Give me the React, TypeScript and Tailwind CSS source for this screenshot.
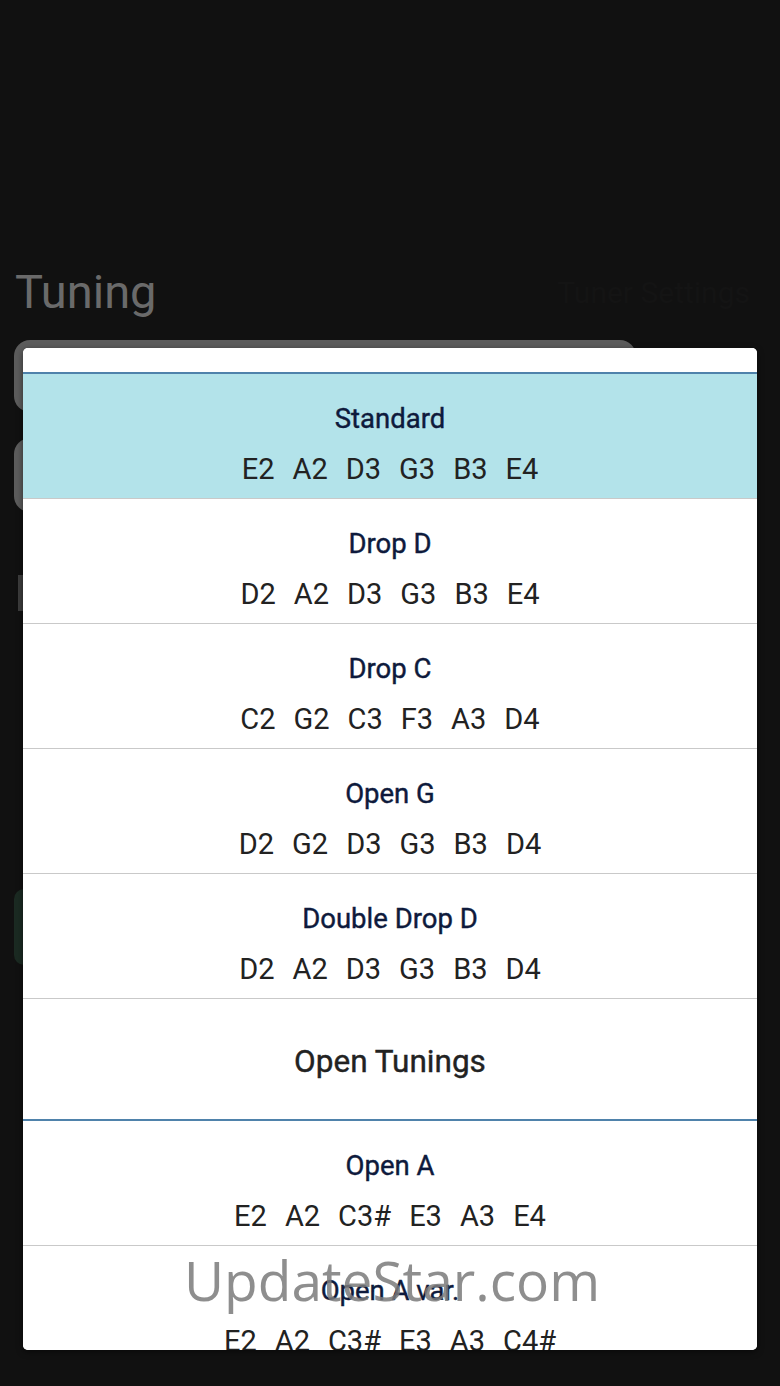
const TUNINGS = [
  { name: "Standard", notes: ["E2", "A2", "D3", "G3", "B3", "E4"], selected: true },
  { name: "Drop D", notes: ["D2", "A2", "D3", "G3", "B3", "E4"] },
  { name: "Drop C", notes: ["C2", "G2", "C3", "F3", "A3", "D4"] },
  { name: "Open G", notes: ["D2", "G2", "D3", "G3", "B3", "D4"] },
  { name: "Double Drop D", notes: ["D2", "A2", "D3", "G3", "B3", "D4"] },
];

const OPEN = [
  { name: "Open A", notes: ["E2", "A2", "C3#", "E3", "A3", "E4"] },
  { name: "Open A var.", notes: ["E2", "A2", "C3#", "E3", "A3", "C4#"] },
];

function TuningRow({
  name,
  notes,
  selected,
}: {
  name: string;
  notes: string[];
  selected?: boolean;
}) {
  return (
    <div
      className={
        "h-[125px] shrink-0 flex flex-col items-center border-b-[1.5px] border-[#c9c9c9] pt-[31px] " +
        (selected ? "bg-[#b3e3ea]" : "bg-white")
      }
    >
      <div className="text-[27.5px] leading-[28px] text-[#0e1a3c] [-webkit-text-stroke:0.4px_#0e1a3c]">
        {name}
      </div>
      <div className="mt-[19px] flex gap-[18px] text-[29px] leading-[34px] text-[#222]">
        {notes.map((n, i) => (
          <span key={i}>{n}</span>
        ))}
      </div>
    </div>
  );
}

export default function App() {
  return (
    <div
      className="relative w-[780px] h-[1386px] bg-[#111111] overflow-hidden"
      style={{ fontFamily: "Roboto, 'Noto Sans', sans-serif" }}
    >
      {/* screen behind the dialog */}
      <div className="pt-[262px] pl-[15px] pr-[30px] flex flex-col">
        <div className="flex items-start justify-between">
          <div className="text-[47px] leading-[60px] text-[#6a6a6a]">Tuning</div>
          <div className="mt-[8px] text-[30px] text-[#141414]">Tuner Settings</div>
        </div>
        <div className="mt-[18px] -ml-[1px] w-[622px] h-[72px] rounded-[16px] bg-[#5c5c5c]" />
        <div className="mt-[26px] -ml-[1px] w-[622px] h-[74px] rounded-[16px] bg-[#5c5c5c]" />
        <div className="mt-[63px] ml-[3px] w-[6px] h-[36px] bg-[#3d3d3d]" />
        <div className="mt-[278px] -ml-[1px] w-[200px] h-[76px] rounded-[10px] bg-[#1b2a22]" />
      </div>

      {/* dialog */}
      <div className="absolute left-[23px] top-[348px] w-[734px] h-[1002px] rounded-[5px] bg-white overflow-hidden flex flex-col shadow-[0_2px_6px_rgba(0,0,0,0.5)]">
        <div className="h-[26px] shrink-0 bg-white border-b-[2px] border-[#4f82ab]" />
        {TUNINGS.map((t) => (
          <TuningRow key={t.name} {...t} />
        ))}
        <div className="h-[122px] shrink-0 flex items-center justify-center border-b-[2px] border-[#4f82ab] pt-[6px] text-[31.5px] text-[#222] [-webkit-text-stroke:0.4px_#222]">
          Open Tunings
        </div>
        {OPEN.map((t) => (
          <TuningRow key={t.name} {...t} />
        ))}
      </div>

      {/* watermark */}
      <div
        className="absolute left-[184px] top-[1245px] text-[55px] leading-[70px] text-[#7a7a7a]/85"
        style={{ fontFamily: "'Open Sans', sans-serif" }}
      >
        UpdateStar.com
      </div>
    </div>
  );
}
